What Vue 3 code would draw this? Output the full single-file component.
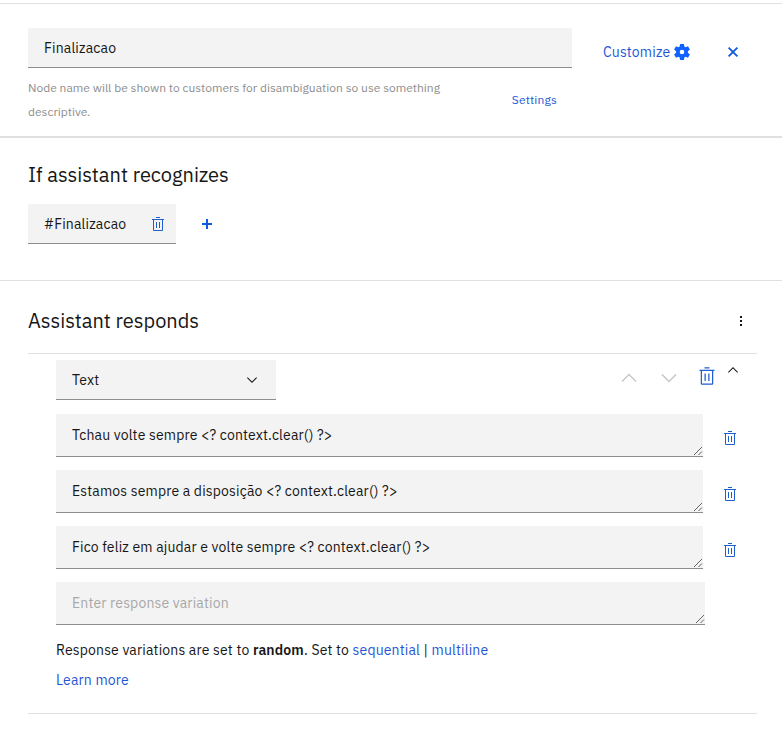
<script setup>
import { ref, h } from 'vue'

const nodeName = ref('Finalizacao')
const responses = ref([
  'Tchau volte sempre <? context.clear() ?>',
  'Estamos sempre a disposição <? context.clear() ?>',
  'Fico feliz em ajudar e volte sempre <? context.clear() ?>',
])

const TrashIcon = (props) =>
  h('svg', { width: props.size, height: props.size, viewBox: '0 0 32 32', fill: 'currentColor' }, [
    h('path', { d: 'M12 12h2v12h-2zM18 12h2v12h-2zM12 2h8v2h-8z' }),
    h('path', { d: 'M4 6v2h2v20a2 2 0 0 0 2 2h16a2 2 0 0 0 2-2V8h2V6zM8 28V8h16v20z' }),
  ])
TrashIcon.props = ['size']

const Grip = () =>
  h('svg', { width: 10, height: 10, viewBox: '0 0 10 10', fill: 'none', stroke: '#555', 'stroke-width': 0.9 }, [
    h('path', { d: 'M1 9L9 1M5.5 9L9 5.5' }),
  ])
</script>

<template>
  <main class="panel">
    <header class="head">
      <div class="name-col">
        <div class="field name-field">{{ nodeName }}</div>
        <div class="hint-row">
          <p class="hint">Node name will be shown to customers for disambiguation so use something<br>descriptive.</p>
          <a class="link settings">Settings</a>
        </div>
      </div>
      <a class="link customize">
        <span>Customize</span>
        <svg width="16" height="16" viewBox="-8 -8 16 16" fill="#0f62fe">
          <path fill-rule="evenodd" d="M-1.9-8H1.9L2.4-5.4 3.5-4.8 6-5.7 7.9-2.4 5.9-.7V.7L7.9 2.4 6 5.7 3.5 4.8 2.4 5.4 1.9 8H-1.9L-2.4 5.4-3.5 4.8-6 5.7-7.9 2.4-5.9.7V-.7L-7.9-2.4-6-5.7-3.5-4.8-2.4-5.4ZM0-2.3A2.3 2.3 0 1 0 0 2.3 2.3 2.3 0 1 0 0-2.3Z" />
        </svg>
      </a>
      <svg class="close" width="12" height="12" viewBox="0 0 12 12" fill="none" stroke="#0f5be0" stroke-width="1.8"><path d="M1.6 1.6l8.8 8.8M10.4 1.6l-8.8 8.8" /></svg>
    </header>

    <section class="recognizes">
      <h2>If assistant recognizes</h2>
      <div class="conditions">
        <div class="field chip">
          <span>#Finalizacao</span>
          <TrashIcon class="blue" size="16" />
        </div>
        <svg width="10" height="10" viewBox="0 0 10 10" fill="#0f5be0"><path d="M4 0h2v4h4v2H6v4H4V6H0V4h4z" /></svg>
      </div>
    </section>

    <section class="responds">
      <div class="title-row">
        <h2>Assistant responds</h2>
        <svg width="4" height="12" viewBox="0 0 4 12" fill="#161616"><path d="M1 1h2v2H1zM1 5h2v2H1zM1 9h2v2H1z" /></svg>
      </div>
      <div class="response-block">
        <div class="toolbar">
          <div class="field dropdown">
            <span>Text</span>
            <svg width="16" height="16" viewBox="0 0 16 16" fill="#161616"><path d="M8 11L3 6l.7-.7L8 9.6l4.3-4.3L13 6z" /></svg>
          </div>
          <div class="actions">
            <svg width="24" height="24" viewBox="0 0 16 16" fill="#c6c6c6"><path d="M8 5l5 5-.7.7L8 6.4 3.7 10.7 3 10z" /></svg>
            <svg width="24" height="24" viewBox="0 0 16 16" fill="#c6c6c6"><path d="M8 11L3 6l.7-.7L8 9.6l4.3-4.3L13 6z" /></svg>
            <TrashIcon class="blue big-trash" size="20" />
            <svg class="collapse" width="16" height="16" viewBox="0 0 16 16" fill="#161616"><path d="M8 5l5 5-.7.7L8 6.4 3.7 10.7 3 10z" /></svg>
          </div>
        </div>
        <div v-for="text in responses" :key="text" class="variation">
          <div class="field area"><span>{{ text }}</span><Grip class="grip" /></div>
          <TrashIcon class="blue" size="16" />
        </div>
        <div class="variation">
          <div class="field area empty"><span>Enter response variation</span><Grip class="grip" /></div>
        </div>
        <p class="mode">Response variations are set to <b>random</b>. Set to <a class="link">sequential</a> | <a class="link">multiline</a></p>
        <p class="learn"><a class="link">Learn more</a></p>
      </div>
    </section>
  </main>
</template>

<style>
body { margin: 0; background: #fff; }
</style>

<style scoped>
* { box-sizing: border-box; }
.panel {
  width: 782px;
  height: 738px;
  overflow: hidden;
  padding-top: 3px;
  background: #fff;
  color: #161616;
  font: 14px/18px "IBM Plex Sans", Roboto, "Liberation Sans", sans-serif;
  letter-spacing: 0.16px;
  white-space: nowrap;
}
svg { display: block; flex: none; }
h2, p { margin: 0; }
h2 { font-size: 20px; line-height: 26px; font-weight: 400; letter-spacing: 0; }
b { font-weight: 600; }
.link { color: #1f57d6; text-decoration: none; }
.blue { color: #1f5fd0; }
.field {
  display: flex;
  align-items: center;
  padding-top: 1px;
  background: #f3f3f3;
  border-bottom: 1px solid #8d8d8d;
}
.head {
  display: flex;
  align-items: flex-start;
  height: 135px;
  padding: 24px 28px 0;
  border-top: 1px solid #e0e0e0;
  border-bottom: 2px solid #e0e0e0;
}
.name-col { width: 544px; }
.name-field { height: 40px; padding-left: 16px; }
.hint-row { display: flex; justify-content: space-between; padding: 8px 15px 0 0; font-size: 12px; line-height: 24px; }
.hint { color: #8d8d8d; letter-spacing: 0; }
.settings { padding-top: 12px; }
.customize { display: flex; align-items: center; height: 48px; width: 87px; margin-left: 31px; justify-content: space-between; }
.close { margin: 18px 0 0 37px; }
.recognizes { height: 143px; padding: 24px 28px 0; border-bottom: 1px solid #e0e0e0; }
.conditions { display: flex; align-items: center; gap: 26px; margin-top: 16px; }
.chip { width: 148px; height: 40px; padding: 1px 10px 0 16px; justify-content: space-between; }
.responds { padding: 27px 25px 0 28px; }
.title-row { display: flex; align-items: center; justify-content: space-between; height: 46px; padding: 0 14px 20px 0; border-bottom: 1px solid #e0e0e0; }
.response-block { height: 360px; padding: 6px 0 0 28px; border-bottom: 1px solid #e0e0e0; }
.toolbar { display: flex; justify-content: space-between; height: 54px; }
.dropdown { width: 220px; height: 40px; padding: 1px 16px 0; justify-content: space-between; }
.actions { display: flex; align-items: flex-start; gap: 16px; padding: 6px 16px 0 0; }
.big-trash { margin-right: -8px; }
.collapse { margin-top: -4px; }
.variation { display: flex; height: 56px; gap: 19px; }
.variation > .blue { margin-top: 16px; }
.area { position: relative; width: 647px; height: 43px; padding: 0 0 0 16px; }
.grip { position: absolute; right: 0; bottom: 0; }
.empty { width: 649px; color: #a8a8a8; }
.mode { margin-top: 3px; }
.learn { margin-top: 12px; }
</style>
